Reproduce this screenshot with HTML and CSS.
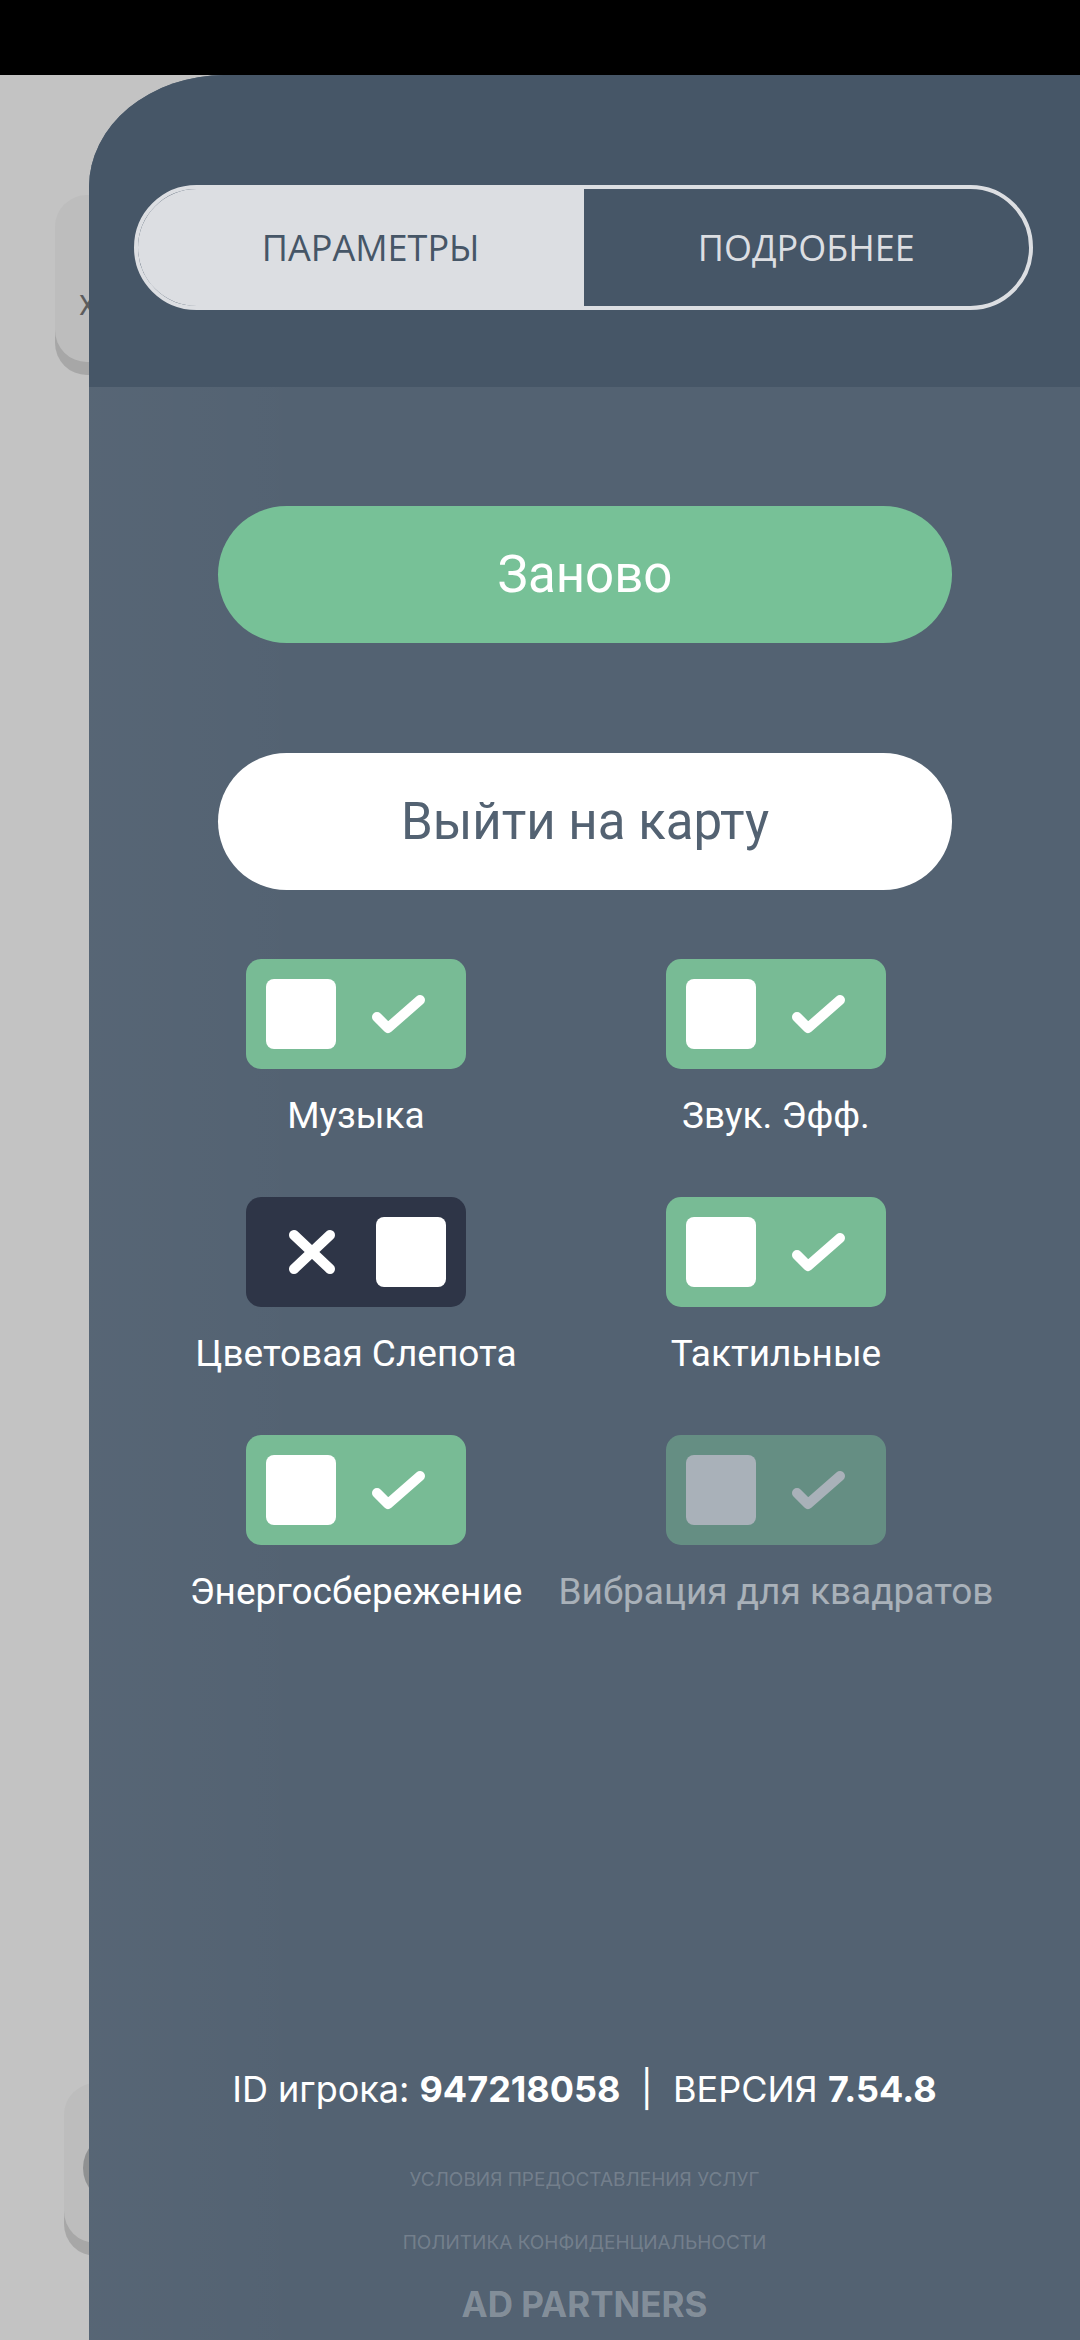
FILE: index.html
```html
<!DOCTYPE html>
<html lang="ru">
<head>
  <meta charset="UTF-8">
  <meta name="viewport" content="width=device-width, initial-scale=1.0">
  <title>Параметры</title>
  <link rel="stylesheet" href="styles.css">
</head>
<body>
  <div class="statusbar"></div>

  <div class="screen">
    <!-- game screen under the sheet -->
    <div class="backdrop">
      <div class="ghost-btn ghost-top"><span>Х</span></div>
      <div class="ghost-btn ghost-bottom"><span class="ghost-icon"></span></div>
    </div>

    <div class="panel">
      <div class="panel-head">
        <div class="tabs">
          <div class="tab active">ПАРАМЕТРЫ</div>
          <div class="tab">ПОДРОБНЕЕ</div>
        </div>
      </div>

      <div class="panel-body">
        <button class="btn btn-green">Заново</button>
        <button class="btn btn-white">Выйти на карту</button>

        <div class="options">
          <div class="option">
            <div class="toggle on">
              <span class="knob"></span>
              <span class="mark"><svg width="57" height="42" viewBox="0 0 57 42"><path d="M7 24 L18 35 L50 7" /></svg></span>
            </div>
            <div class="label">Музыка</div>
          </div>
          <div class="option">
            <div class="toggle on">
              <span class="knob"></span>
              <span class="mark"><svg width="57" height="42" viewBox="0 0 57 42"><path d="M7 24 L18 35 L50 7" /></svg></span>
            </div>
            <div class="label">Звук. Эфф.</div>
          </div>
          <div class="option">
            <div class="toggle off">
              <span class="mark"><svg width="48" height="46" viewBox="0 0 48 46"><path d="M6 6 L42 40 M42 6 L6 40" /></svg></span>
              <span class="knob"></span>
            </div>
            <div class="label">Цветовая Слепота</div>
          </div>
          <div class="option">
            <div class="toggle on">
              <span class="knob"></span>
              <span class="mark"><svg width="57" height="42" viewBox="0 0 57 42"><path d="M7 24 L18 35 L50 7" /></svg></span>
            </div>
            <div class="label">Тактильные</div>
          </div>
          <div class="option">
            <div class="toggle on">
              <span class="knob"></span>
              <span class="mark"><svg width="57" height="42" viewBox="0 0 57 42"><path d="M7 24 L18 35 L50 7" /></svg></span>
            </div>
            <div class="label">Энергосбережение</div>
          </div>
          <div class="option disabled">
            <div class="toggle on">
              <span class="knob"></span>
              <span class="mark"><svg width="57" height="42" viewBox="0 0 57 42"><path d="M7 24 L18 35 L50 7" /></svg></span>
            </div>
            <div class="label">Вибрация для квадратов</div>
          </div>
        </div>

        <div class="footer">
          <p class="player-info">ID игрока: <b>947218058</b>&nbsp;&nbsp;|&nbsp;&nbsp;ВЕРСИЯ <b>7.54.8</b></p>
          <a class="link" href="#">УСЛОВИЯ ПРЕДОСТАВЛЕНИЯ УСЛУГ</a>
          <a class="link" href="#">ПОЛИТИКА КОНФИДЕНЦИАЛЬНОСТИ</a>
          <a class="link link-big" href="#">AD PARTNERS</a>
        </div>
      </div>
    </div>
  </div>
</body>
</html>
```

FILE: styles.css
```css
body {
  margin: 0;
  width: 1080px;
  height: 2340px;
  overflow: hidden;
  background-color: #c3c3c3;
  font-family: Roboto, "Noto Sans", sans-serif;
}

.statusbar {
  height: 75px;
  background: #000;
}

.screen {
  position: relative;
  height: 2265px;
}

/* things behind the sheet */
.backdrop {
  padding: 120px 0 0 55px;
}

.ghost-btn {
  width: 200px;
  background: #bdbdbd;
  border-radius: 32px;
  box-shadow: 0 13px 0 #a7a7a7;
}

.ghost-top {
  height: 167px;
  display: flex;
  align-items: flex-end;
  padding-left: 24px;
  box-sizing: border-box;
}

.ghost-top span {
  font-size: 27px;
  color: #5c5c5c;
  line-height: 1;
  margin-bottom: 42px;
}

.ghost-bottom {
  height: 160px;
  margin: 1721px 0 0 9px;
  padding: 50px 0 0 19px;
  box-sizing: border-box;
}

.ghost-icon {
  display: block;
  width: 70px;
  height: 70px;
  border-radius: 50%;
  background: #8f9192;
}

/* settings sheet */
.panel {
  position: absolute;
  top: 0;
  left: 89px;
  right: 0;
  bottom: 0;
  display: flex;
  flex-direction: column;
  background: #536272;
  border-top-left-radius: 136px 112px;
  overflow: hidden;
}

.panel-head {
  height: 312px;
  box-sizing: border-box;
  padding: 110px 47px 0 45px;
  background: #465667;
}

.tabs {
  display: grid;
  grid-template-columns: 1fr 1fr;
  height: 125px;
  box-sizing: border-box;
  border: 4px solid #dcdee2;
  border-radius: 63px;
  overflow: hidden;
}

.tab {
  display: flex;
  align-items: center;
  justify-content: center;
  font-family: "Open Sans", sans-serif;
  font-size: 36px;
  color: #dcdee2;
}

.tab.active {
  padding-left: 20px;
  background: #dcdee2;
  color: #465667;
}

.panel-body {
  flex: 1;
  display: flex;
  flex-direction: column;
  padding-top: 119px;
  background: linear-gradient(90deg, rgba(255, 255, 255, 0.025), rgba(255, 255, 255, 0) 220px);
}

.btn {
  display: block;
  height: 137px;
  margin: 0 128px 0 129px;
  border: none;
  border-radius: 69px;
  font-family: Roboto, sans-serif;
  font-size: 51px;
  cursor: pointer;
}

.btn-green {
  background: #77c197;
  color: #fff;
}

.btn-white {
  margin-top: 110px;
  background: #fff;
  color: #536272;
}

.options {
  display: grid;
  grid-template-columns: 420px 420px;
  row-gap: 61px;
  padding-left: 57px;
  margin-top: 69px;
}

.option {
  display: flex;
  flex-direction: column;
  align-items: center;
}

.toggle {
  display: flex;
  align-items: center;
  width: 220px;
  height: 110px;
  box-sizing: border-box;
  padding: 0 20px;
  border-radius: 15px;
}

.toggle.on {
  background: #78bb95;
}

.toggle.off {
  background: #2e3547;
}

.knob {
  width: 70px;
  height: 70px;
  border-radius: 8px;
  background: #fff;
}

.mark {
  flex: 1;
  display: flex;
  justify-content: center;
  align-items: center;
}

.toggle.on .mark {
  padding-left: 14px;
}

.toggle.off .mark {
  padding-right: 19px;
}

.mark svg path {
  fill: none;
  stroke: #fff;
  stroke-width: 10;
  stroke-linecap: round;
  stroke-linejoin: round;
}

.label {
  margin-top: 27px;
  font-size: 37px;
  line-height: 40px;
  color: #fff;
  white-space: nowrap;
}

.option.disabled {
  opacity: 0.5;
}

.footer {
  margin-top: auto;
  padding-bottom: 16px;
  display: flex;
  flex-direction: column;
  align-items: center;
  font-family: Inter, "Noto Sans", sans-serif;
}

.player-info {
  margin: 0;
  font-size: 36px;
  line-height: 40px;
  color: #fff;
}

.player-info b {
  font-weight: 700;
}

.link {
  margin-top: 33px;
  font-size: 19px;
  line-height: 30px;
  color: rgba(255, 255, 255, 0.2);
  text-decoration: none;
}

.link:first-of-type {
  margin-top: 56px;
}

.link-big {
  margin-top: 26px;
  font-size: 35px;
  line-height: 40px;
  font-weight: 700;
  color: rgba(255, 255, 255, 0.3);
}
```
